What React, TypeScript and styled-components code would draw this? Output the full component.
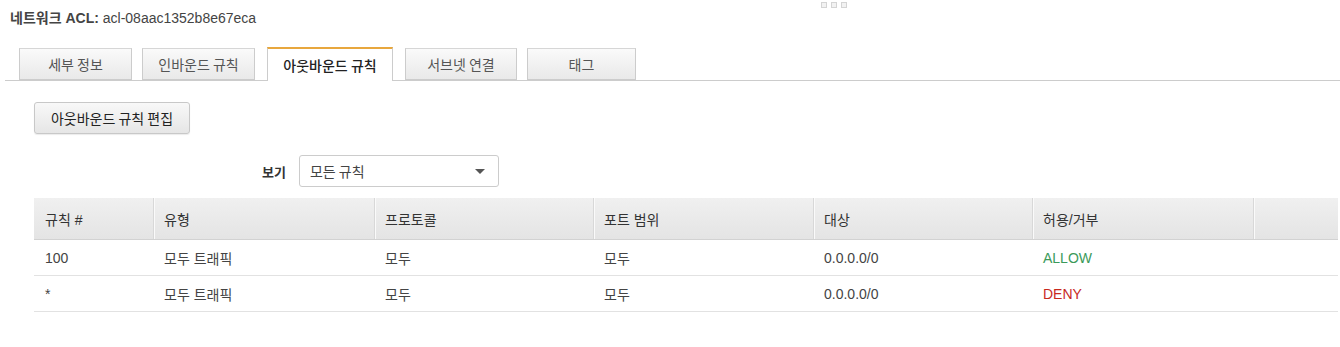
import styled, { createGlobalStyle } from "styled-components";

const GlobalStyle = createGlobalStyle`
  body {
    margin: 0;
    background: #fff;
    font-family: "Liberation Sans", Arial, "Noto Sans CJK KR", sans-serif;
    font-size: 14px;
    color: #444;
  }
`;

const tabs = [
  { label: "세부 정보", width: 113 },
  { label: "인바운드 규칙", width: 113 },
  { label: "아웃바운드 규칙", width: 126 },
  { label: "서브넷 연결", width: 112 },
  { label: "태그", width: 109 },
];

const rules = [
  { num: "100", type: "모두 트래픽", proto: "모두", port: "모두", dest: "0.0.0.0/0", action: "ALLOW" },
  { num: "*", type: "모두 트래픽", proto: "모두", port: "모두", dest: "0.0.0.0/0", action: "DENY" },
];

const columns = ["규칙 #", "유형", "프로토콜", "포트 범위", "대상", "허용/거부", ""];
const widths = [119, 221, 219, 220, 219, 221, 85];

const App = () => {
  return (
    <>
      <GlobalStyle />
      <Page>
        <Handle>
          <Dot />
          <Dot />
          <Dot />
        </Handle>
        <Title>
          <b>네트워크 ACL:</b> acl-08aac1352b8e67eca
        </Title>
        <TabBar>
          {tabs.map((t, i) => (
            <Tab key={t.label} $active={i === 2} $width={t.width}>
              {t.label}
            </Tab>
          ))}
        </TabBar>
        <Body>
          <EditButton>아웃바운드 규칙 편집</EditButton>
          <FilterRow>
            <FilterLabel>보기</FilterLabel>
            <Select>
              <span>모든 규칙</span>
              <Caret />
            </Select>
          </FilterRow>
          <Table>
            <colgroup>
              {widths.map((w, i) => (
                <col key={i} style={{ width: w }} />
              ))}
            </colgroup>
            <thead>
              <tr>
                {columns.map((c, i) => (
                  <Th key={i}>{c}</Th>
                ))}
              </tr>
            </thead>
            <tbody>
              {rules.map((r) => (
                <tr key={r.num}>
                  <Td>{r.num}</Td>
                  <Td>{r.type}</Td>
                  <Td>{r.proto}</Td>
                  <Td>{r.port}</Td>
                  <Td>{r.dest}</Td>
                  <Td>
                    <Action $allow={r.action === "ALLOW"}>{r.action}</Action>
                  </Td>
                  <Td />
                </tr>
              ))}
            </tbody>
          </Table>
        </Body>
      </Page>
    </>
  );
};

export default App;

const Page = styled.div`
  position: relative;
  padding-top: 9px;
`;

const Handle = styled.div`
  position: absolute;
  top: 2px;
  left: 821px;
  display: flex;
  gap: 4px;
`;

const Dot = styled.div`
  width: 4px;
  height: 4px;
  border: 1px solid #d4d4d4;
  background: #f2f2f2;
`;

const Title = styled.div`
  padding-left: 10px;
  height: 18px;
  line-height: 18px;
  font-size: 14px;
  color: #444;
  b {
    font-weight: bold;
  }
`;

const TabBar = styled.div`
  display: flex;
  align-items: flex-end;
  gap: 10px;
  margin-top: 20px;
  margin-left: 5px;
  padding-left: 14px;
  border-bottom: 1px solid #ccc;
  height: 33px;
`;

const Tab = styled.div<{ $active?: boolean; $width: number }>`
  box-sizing: border-box;
  width: ${(p) => p.$width}px;
  height: ${(p) => (p.$active ? "34px" : "32px")};
  margin: ${(p) => (p.$active ? "0 2px -1px" : "0")};
  display: flex;
  align-items: center;
  justify-content: center;
  font-family: "Noto Sans CJK KR", sans-serif;
  font-size: 14px;
  color: ${(p) => (p.$active ? "#222" : "#555")};
  font-weight: ${(p) => (p.$active ? 500 : 400)};
  border: 1px solid #ccc;
  border-bottom: ${(p) => (p.$active ? "none" : "1px solid #ccc")};
  border-top: ${(p) => (p.$active ? "2px solid #e8a73d" : "1px solid #d6d6d6")};
  background: ${(p) =>
    p.$active ? "#fff" : "linear-gradient(#fafafa, #e9e9e9)"};
`;

const Body = styled.div`
  padding: 21px 2px 0 34px;
`;

const EditButton = styled.button`
  box-sizing: border-box;
  height: 32px;
  padding: 0 8px;
  width: 156px;
  font-family: "Noto Sans CJK KR", sans-serif;
  font-size: 14px;
  font-weight: 400;
  color: #222;
  border: 1px solid #c8c8c8;
  border-radius: 3px;
  background: linear-gradient(#f8f8f8, #e6e6e6);
  box-shadow: 0 1px 1px rgba(0, 0, 0, 0.08);
`;

const FilterRow = styled.div`
  display: flex;
  align-items: center;
  gap: 13px;
  margin-top: 21px;
  padding-left: 228px;
`;

const FilterLabel = styled.span`
  font-family: "Noto Sans CJK KR", sans-serif;
  font-weight: bold;
  font-size: 13px;
  color: #333;
`;

const Select = styled.div`
  box-sizing: border-box;
  width: 200px;
  height: 32px;
  border: 1px solid #ccc;
  border-radius: 3px;
  display: flex;
  align-items: center;
  justify-content: space-between;
  padding: 0 13px 0 10px;
  font-family: "Noto Sans CJK KR", sans-serif;
  font-size: 14px;
  color: #444;
  background: #fff;
`;

const Caret = styled.span`
  width: 0;
  height: 0;
  border-left: 5px solid transparent;
  border-right: 5px solid transparent;
  border-top: 5px solid #555;
`;

const Table = styled.table`
  margin-top: 11px;
  width: 1304px;
  border-collapse: collapse;
  table-layout: fixed;
`;

const Th = styled.th`
  height: 41px;
  padding: 0 0 0 11px;
  text-align: left;
  font-family: "Liberation Sans", "Noto Sans CJK KR", sans-serif;
  font-weight: normal;
  font-size: 14px;
  color: #333;
  background: linear-gradient(#f0f0f0, #e4e4e4);
  border-bottom: 1px solid #d2d2d2;
  & + & {
    box-shadow: inset 1px 0 0 #d8d8d8, inset 2px 0 0 #fafafa;
  }
`;

const Td = styled.td`
  height: 35px;
  padding: 0 0 0 11px;
  font-family: "Liberation Sans", "Noto Sans CJK KR", sans-serif;
  font-size: 14px;
  color: #444;
  border-bottom: 1px solid #e2e2e2;
`;

const Action = styled.span<{ $allow: boolean }>`
  color: ${(p) => (p.$allow ? "#3b9a5a" : "#c8281e")};
`;
